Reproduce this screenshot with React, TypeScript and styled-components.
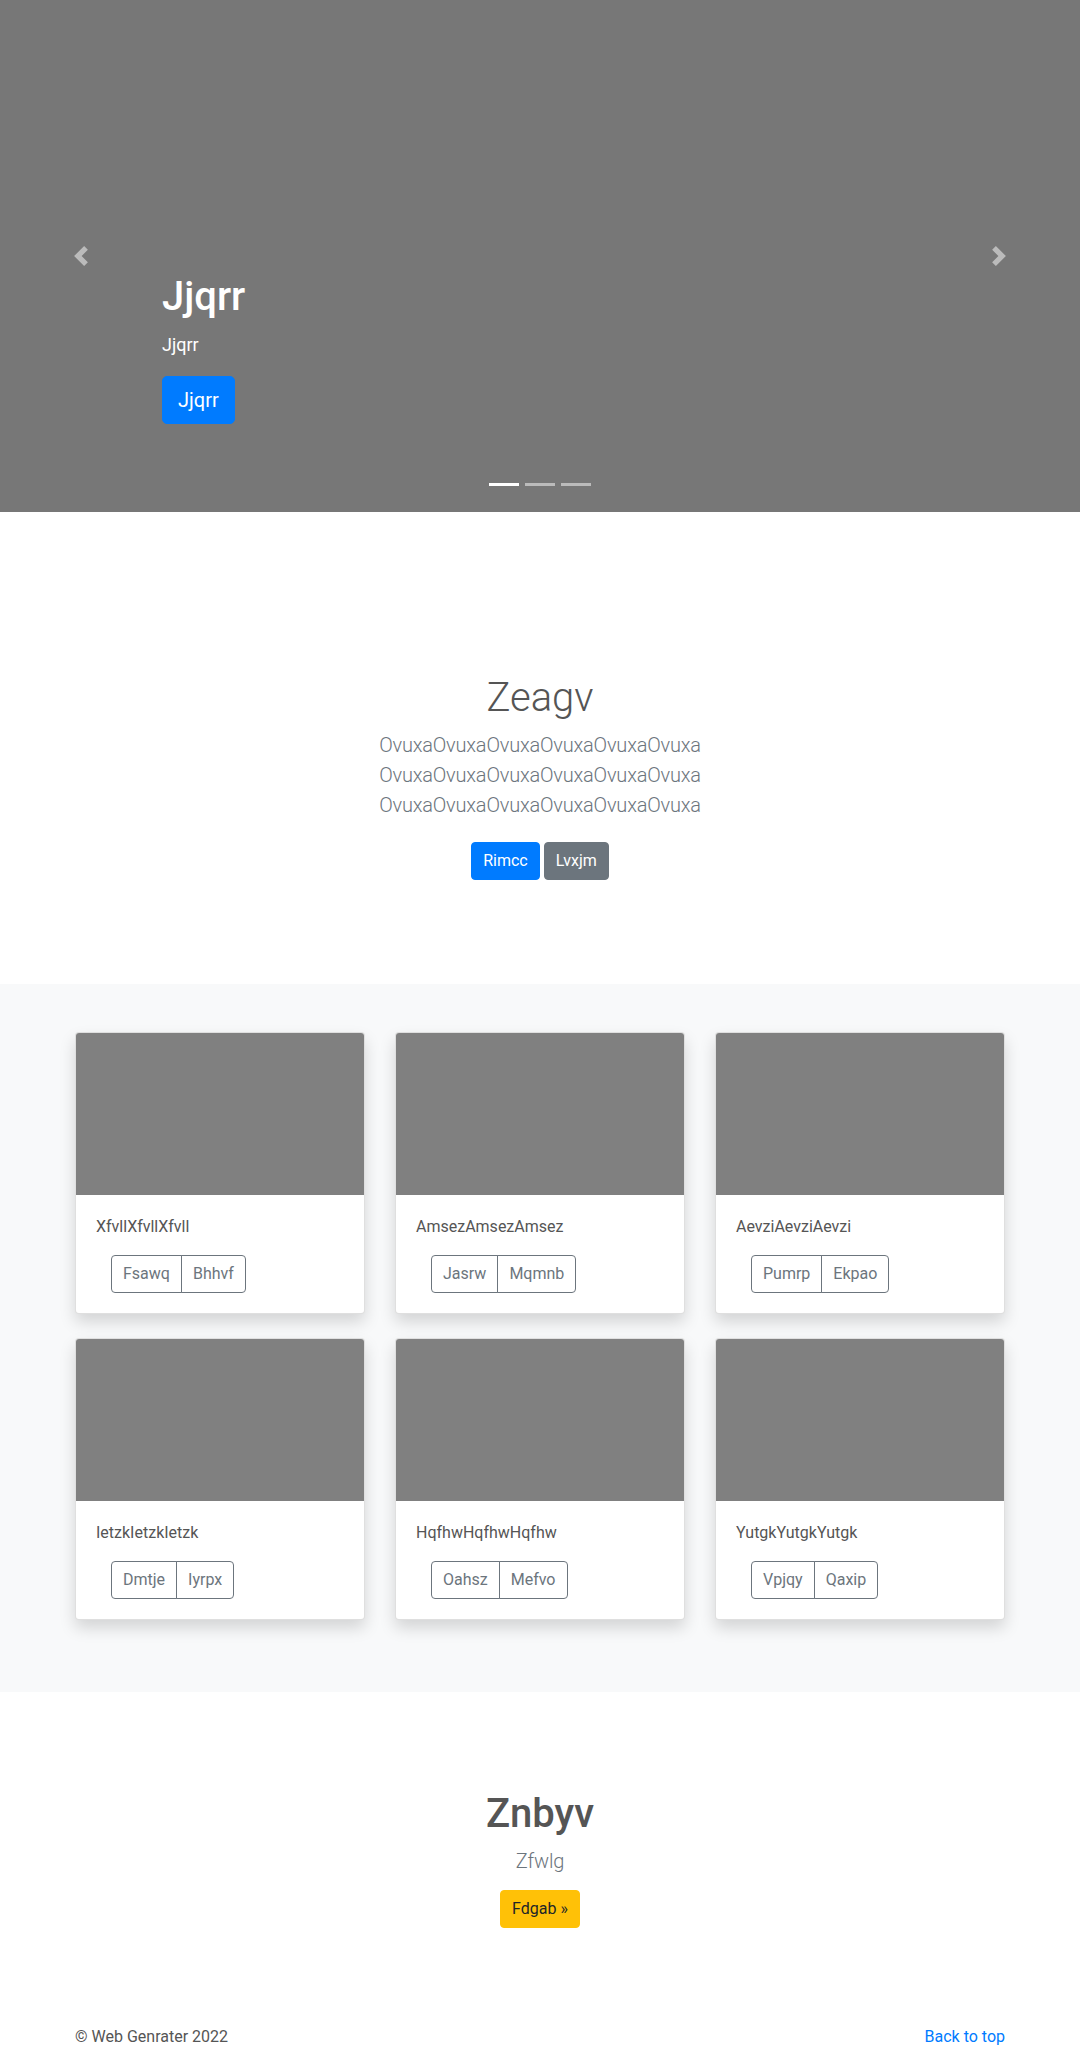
import React from "react";
import styled, { createGlobalStyle } from "styled-components";

const Global = createGlobalStyle`
  * { box-sizing: border-box; }
  html, body { margin: 0; padding: 0; }
  body {
    font-family: "Segoe UI", Roboto, "Helvetica Neue", Arial, "Noto Sans", sans-serif;
    font-size: 16px;
    line-height: 1.5;
    color: #555;
    background: #fff;
  }
  h1, p { margin: 0; }
`;

const Carousel = styled.div`
  position: relative;
  height: 512px;
  background: #777;
  overflow: hidden;
`;

const Control = styled.a<{ $side: "left" | "right" }>`
  position: absolute;
  top: 0;
  bottom: 0;
  ${(p) => (p.$side === "left" ? "left: 0;" : "right: 0;")}
  width: 15%;
  display: flex;
  align-items: center;
  justify-content: center;
  opacity: 0.5;
  svg { width: 20px; height: 20px; display: block; }
`;

const Indicators = styled.ol`
  position: absolute;
  left: 15%;
  right: 15%;
  top: 483px;
  margin: 0;
  padding: 0;
  list-style: none;
  display: flex;
  justify-content: center;
`;

const Indicator = styled.li<{ $active?: boolean }>`
  width: 30px;
  height: 3px;
  margin: 0 3px;
  background: ${(p) => (p.$active ? "#fff" : "rgba(255,255,255,0.5)")};
`;

const Caption = styled.div`
  position: absolute;
  left: 15%;
  right: 15%;
  bottom: 48px;
  padding: 20px 0;
  color: #fff;
  text-align: left;
`;

const CaptionTitle = styled.h1`
  font-size: 40px;
  line-height: 48px;
  font-weight: 500;
  margin-bottom: 10px;
`;

const CaptionText = styled.p`
  font-size: 18px;
  line-height: 27px;
  margin-bottom: 18px;
`;

const BtnRow = styled.p<{ $mb?: number }>`
  margin-bottom: ${(p) => p.$mb ?? 0}px;
`;

const Button = styled.a<{ $variant: "primary" | "secondary" | "warning"; $lg?: boolean; $my?: number }>`
  display: inline-block;
  font-weight: 400;
  text-align: center;
  vertical-align: middle;
  border: 1px solid transparent;
  border-radius: ${(p) => (p.$lg ? "5px" : "4px")};
  font-size: ${(p) => (p.$lg ? "20px" : "16px")};
  line-height: ${(p) => (p.$lg ? "30px" : "24px")};
  padding: ${(p) => (p.$lg ? "8px 15px" : "6px 11px")};
  margin: ${(p) => p.$my ?? 0}px 0;
  text-decoration: none;
  cursor: pointer;
  ${(p) =>
    p.$variant === "primary"
      ? "background:#007bff;border-color:#007bff;color:#fff;"
      : p.$variant === "secondary"
      ? "background:#6c757d;border-color:#6c757d;color:#fff;"
      : "background:#ffc107;border-color:#ffc107;color:#212529;"}
`;

const Container = styled.div`
  width: 960px;
  margin: 0 auto;
  padding: 0 15px;
`;

const Hero = styled.section`
  margin-top: 64px;
  padding: 98px 0 96px;
  text-align: center;
`;

const HeroTitle = styled.h1`
  font-size: 40px;
  line-height: 48px;
  font-weight: 300;
  color: #555;
  margin-bottom: 8px;
`;

const Lead = styled.p<{ $mb?: number }>`
  font-size: 20px;
  line-height: 30px;
  font-weight: 300;
  letter-spacing: -0.2px;
  color: #6c757d;
  margin-bottom: ${(p) => p.$mb ?? 14}px;
`;

const Album = styled.section`
  background: #f8f9fa;
  padding: 48px 0 72px;
`;

const Grid = styled.div`
  display: grid;
  grid-template-columns: repeat(3, 290px);
  column-gap: 30px;
  row-gap: 24px;
`;

const Card = styled.div`
  background: #fff;
  border: 1px solid rgba(0, 0, 0, 0.125);
  border-radius: 4px;
  box-shadow: 0 8px 16px rgba(0, 0, 0, 0.15);
  overflow: hidden;
  display: flex;
  flex-direction: column;
`;

const CardImage = styled.div`
  height: 162px;
  background: #808080;
`;

const CardBody = styled.div`
  padding: 20px;
`;

const CardText = styled.p`
  font-size: 16px;
  line-height: 24px;
  color: #555;
  margin-bottom: 16px;
`;

const BtnGroup = styled.div`
  display: inline-flex;
  margin-left: 15px;
`;

const OutlineBtn = styled.a`
  display: inline-block;
  font-size: 16px;
  line-height: 24px;
  padding: 6px 11px;
  color: #6c757d;
  border: 1px solid #6c757d;
  text-decoration: none;
  &:first-child { border-radius: 4px 0 0 4px; }
  &:last-child { border-radius: 0 4px 4px 0; margin-left: -1px; }
`;

const Marketing = styled.section`
  padding: 98px 0 49px;
  text-align: center;
`;

const MarketingTitle = styled.h1`
  font-size: 40px;
  line-height: 48px;
  font-weight: 500;
  color: #555;
  margin-bottom: 8px;
`;

const Footer = styled.footer`
  padding: 48px 0 48px;
`;

const FooterRow = styled.div`
  display: flex;
  justify-content: space-between;
  align-items: flex-start;
  font-size: 16px;
  line-height: 24px;
  color: #555;
`;

const FooterLink = styled.a`
  color: #007bff;
  text-decoration: none;
`;

const cards = [
  { text: "XfvllXfvllXfvll", a: "Fsawq", b: "Bhhvf" },
  { text: "AmsezAmsezAmsez", a: "Jasrw", b: "Mqmnb" },
  { text: "AevziAevziAevzi", a: "Pumrp", b: "Ekpao" },
  { text: "IetzkIetzkIetzk", a: "Dmtje", b: "Iyrpx" },
  { text: "HqfhwHqfhwHqfhw", a: "Oahsz", b: "Mefvo" },
  { text: "YutgkYutgkYutgk", a: "Vpjqy", b: "Qaxip" },
];

const ovuxa = "OvuxaOvuxaOvuxaOvuxaOvuxaOvuxa";

export default function App() {
  return (
    <>
      <Global />
      <Carousel>
        <Indicators>
          <Indicator $active />
          <Indicator />
          <Indicator />
        </Indicators>
        <Caption>
          <CaptionTitle>Jjqrr</CaptionTitle>
          <CaptionText>Jjqrr</CaptionText>
          <BtnRow $mb={20}>
            <Button $variant="primary" $lg>
              Jjqrr
            </Button>
          </BtnRow>
        </Caption>
        <Control $side="left">
          <svg viewBox="0 0 8 8" fill="#fff">
            <path d="M5.25 0l-4 4 4 4 1.5-1.5-2.5-2.5 2.5-2.5-1.5-1.5z" />
          </svg>
        </Control>
        <Control $side="right">
          <svg viewBox="0 0 8 8" fill="#fff">
            <path d="M2.75 0l-1.5 1.5 2.5 2.5-2.5 2.5 1.5 1.5 4-4-4-4z" />
          </svg>
        </Control>
      </Carousel>

      <Hero>
        <Container>
          <HeroTitle>Zeagv</HeroTitle>
          <Lead>
            {ovuxa}
            <br />
            {ovuxa}
            <br />
            {ovuxa}
          </Lead>
          <BtnRow>
            <Button $variant="primary" $my={8}>
              Rimcc
            </Button>{" "}
            <Button $variant="secondary" $my={8}>
              Lvxjm
            </Button>
          </BtnRow>
        </Container>
      </Hero>

      <Album>
        <Container>
          <Grid>
            {cards.map((c) => (
              <Card key={c.text}>
                <CardImage />
                <CardBody>
                  <CardText>{c.text}</CardText>
                  <BtnGroup>
                    <OutlineBtn>{c.a}</OutlineBtn>
                    <OutlineBtn>{c.b}</OutlineBtn>
                  </BtnGroup>
                </CardBody>
              </Card>
            ))}
          </Grid>
        </Container>
      </Album>

      <Marketing>
        <Container>
          <MarketingTitle>Znbyv</MarketingTitle>
          <Lead>Zfwlg</Lead>
          <BtnRow>
            <Button $variant="warning">Fdgab »</Button>
          </BtnRow>
        </Container>
      </Marketing>

      <Footer>
        <Container>
          <FooterRow>
            <p>© Web Genrater 2022</p>
            <FooterLink>Back to top</FooterLink>
          </FooterRow>
        </Container>
      </Footer>
    </>
  );
}
